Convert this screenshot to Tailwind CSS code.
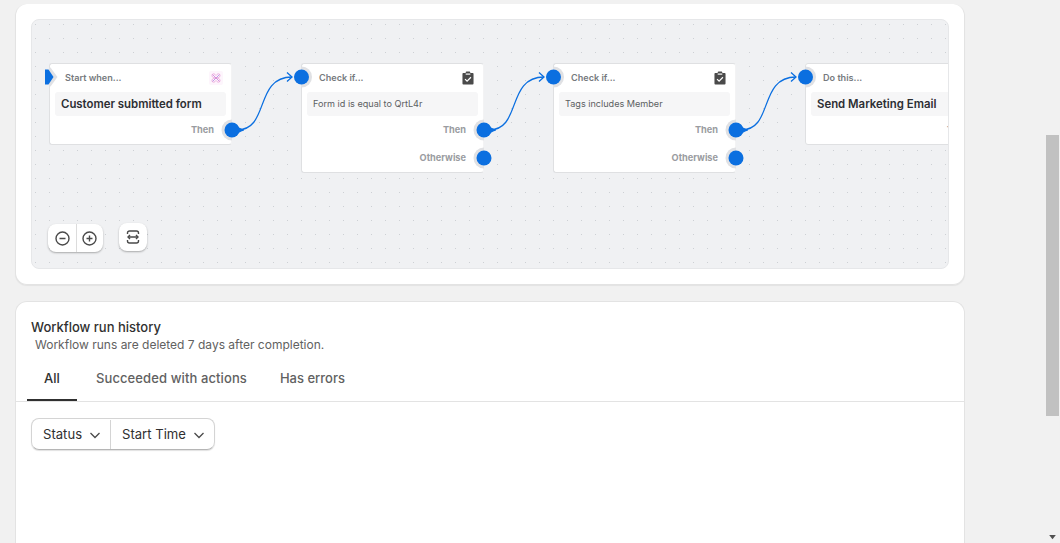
<!DOCTYPE html>
<html lang="en">
<head>
  <meta charset="UTF-8">
  <meta name="viewport" content="width=device-width, initial-scale=1.0">
  <title>Workflow</title>
  <script src="https://cdn.jsdelivr.net/npm/@tailwindcss/browser@4"></script>
</head>
<body class="bg-[#f1f1f1] font-['Inter',sans-serif] text-[#303030] overflow-hidden">
  <div class="flex h-[543px] overflow-hidden">
    <main class="w-[1043px] pl-[15px] pt-1">

      <!-- Workflow canvas card -->
      <section class="w-[950px] h-[281px] p-[15px] bg-white rounded-xl border-b border-x border-[#e3e3e3] shadow-[0_1px_1px_rgba(0,0,0,0.06)]">
        <div class="relative w-[918px] h-[250px] overflow-hidden rounded-lg border border-[#e6e7e9] bg-[#f0f1f3] bg-[radial-gradient(circle_at_0.5px_0.5px,#cdd0d4_0.7px,transparent_0.8px)] bg-[size:14px_14px] bg-[position:3px_4px]">

          <!-- Start node -->
          <div class="absolute left-[17px] top-[43px] w-[183px] h-[82px] bg-white rounded-[3px] border border-[#dfe0e2] border-r-[#f3f3f4]">
            <div class="flex items-center justify-between h-[28px] pl-[15px] pr-[8px] text-[9.1px] font-semibold text-[#767a7e]">
              <span>Start when...</span>
              <svg class="w-[14px] h-[14px]" viewBox="0 0 14 14" fill="none" stroke-width="1"><rect width="14" height="14" rx="2" fill="#fdf5fc" stroke="none"/><path d="M3.500 3.500l7 7" stroke="#c77fdc" opacity=".8"/><path d="M10.500 3.500l-7 7" stroke="#a88be6" opacity=".8"/><path d="M7 4.500C5 1.500 2.500 3 3 5c.3 1.200 1.500 2 4 2s3.700-.8 4-2c.5-2-2-3.500-4-.5zM7 9.500c-2 3-4.500 1.500-4-.5.3-1.200 1.500-2 4-2s3.700.8 4 2c.5 2-2 3.500-4 .5z" stroke="#e58bd0" stroke-width=".8" opacity=".75"/></svg>
            </div>
            <div class="mx-[5px] h-[24px] pl-[6px] rounded-[3px] bg-[#f6f6f7] text-[11.4px] leading-[24px] font-semibold text-[#2c2e33] whitespace-nowrap">Customer submitted form</div>
            <div class="mt-[7px] pr-[17px] text-right text-[9.2px] leading-[14px] font-bold text-[#9a9ca1]">Then</div>
          </div>

          <!-- Check node: form id -->
          <div class="absolute left-[269px] top-[43px] w-[183px] h-[110px] bg-white rounded-[3px] border border-[#dfe0e2] border-r-[#f3f3f4]">
            <div class="flex items-center justify-between h-[28px] pl-[17px] pr-[9px] text-[9.1px] font-semibold text-[#767a7e]">
              <span>Check if...</span>
              <svg class="w-[12px] h-[14px]" viewBox="0 0 13 14"><path d="M4 1.500V1a1 1 0 0 1 1-1h3a1 1 0 0 1 1 1v.500h2.500a1 1 0 0 1 1 1V13a1 1 0 0 1-1 1h-10a1 1 0 0 1-1-1V2.500a1 1 0 0 1 1-1z" fill="#4a4a4a"/><rect x="4" y="2" width="5" height="1.600" fill="#d8d8d8"/><path d="M3.300 8.200l2.200 2.200 4.200-4.200" fill="none" stroke="#fff" stroke-width="1.300"/></svg>
            </div>
            <div class="mx-[5px] h-[24px] pl-[6px] rounded-[3px] bg-[#f6f6f7] text-[9.1px] leading-[24px] text-[#5c5f62] whitespace-nowrap">Form id is equal to QrtL4r</div>
            <div class="mt-[7px] pr-[17px] text-right text-[9.2px] leading-[14px] font-bold text-[#9a9ca1]">Then</div>
            <div class="mt-[14px] pr-[17px] text-right text-[9.2px] leading-[14px] font-bold text-[#9a9ca1]">Otherwise</div>
          </div>

          <!-- Check node: tags -->
          <div class="absolute left-[521px] top-[43px] w-[183px] h-[110px] bg-white rounded-[3px] border border-[#dfe0e2] border-r-[#f3f3f4]">
            <div class="flex items-center justify-between h-[28px] pl-[17px] pr-[9px] text-[9.1px] font-semibold text-[#767a7e]">
              <span>Check if...</span>
              <svg class="w-[12px] h-[14px]" viewBox="0 0 13 14"><path d="M4 1.500V1a1 1 0 0 1 1-1h3a1 1 0 0 1 1 1v.500h2.500a1 1 0 0 1 1 1V13a1 1 0 0 1-1 1h-10a1 1 0 0 1-1-1V2.500a1 1 0 0 1 1-1z" fill="#4a4a4a"/><rect x="4" y="2" width="5" height="1.600" fill="#d8d8d8"/><path d="M3.300 8.200l2.200 2.200 4.200-4.200" fill="none" stroke="#fff" stroke-width="1.300"/></svg>
            </div>
            <div class="mx-[5px] h-[24px] pl-[6px] rounded-[3px] bg-[#f6f6f7] text-[9.1px] leading-[24px] text-[#5c5f62] whitespace-nowrap">Tags includes Member</div>
            <div class="mt-[7px] pr-[17px] text-right text-[9.2px] leading-[14px] font-bold text-[#9a9ca1]">Then</div>
            <div class="mt-[14px] pr-[17px] text-right text-[9.2px] leading-[14px] font-bold text-[#9a9ca1]">Otherwise</div>
          </div>

          <!-- Action node, runs past the canvas edge -->
          <div class="absolute left-[773px] top-[43px] w-[183px] h-[82px] bg-white rounded-[3px] border border-[#dfe0e2]">
            <div class="flex items-center h-[28px] pl-[17px] text-[9.1px] font-semibold text-[#767a7e]">Do this...</div>
            <div class="mx-[5px] h-[24px] pl-[6px] rounded-[3px] bg-[#f6f6f7] text-[11.4px] leading-[24px] font-semibold text-[#2c2e33] whitespace-nowrap">Send Marketing Email</div>
            <div class="mt-[7px] pr-[17px] text-right text-[9.2px] leading-[14px] font-bold text-[#9a9ca1]">Then</div>
          </div>

          <!-- Connections and ports, coordinates are canvas positions -->
          <svg class="absolute left-0 top-0 w-[918px] h-[250px]" viewBox="0 0 918 250" fill="none">
            <path d="M17 47.500h1.500l7 9.500-7 9.500H17z" fill="#e0e1e4"/>
            <path d="M13 49.500h3.500l5 7.500-5 7.500H13z" fill="#0b6fe0"/>

            <!-- halos only show on the card side of each port -->
            <g fill="#e0e1e4">
              <path d="M269.500 46.500a10.500 10.500 0 0 1 0 21z"/><path d="M521.500 46.500a10.500 10.500 0 0 1 0 21z"/><path d="M773.500 46.500a10.500 10.500 0 0 1 0 21z"/>
              <path d="M200 99.500a10.500 10.500 0 0 0 0 21z"/><path d="M452 99.500a10.500 10.500 0 0 0 0 21z"/><path d="M704 99.500a10.500 10.500 0 0 0 0 21z"/>
              <path d="M452 127.500a10.500 10.500 0 0 0 0 21z"/><path d="M704 127.500a10.500 10.500 0 0 0 0 21z"/>
            </g>

            <g stroke="#0b6fe0" stroke-width="1.300">
              <path d="M205 110C238 110 222 57 260 57"/><path d="M255 52.500l5 4.500-5 4.500"/>
              <path d="M457 110C490 110 474 57 512 57"/><path d="M507 52.500l5 4.500-5 4.500"/>
              <path d="M709 110C742 110 726 57 764 57"/><path d="M759 52.500l5 4.500-5 4.500"/>
            </g>

            <g fill="#0b6fe0">
              <circle cx="269.500" cy="57" r="7.500"/><circle cx="521.500" cy="57" r="7.500"/><circle cx="773.500" cy="57" r="7.500"/>
              <circle cx="200" cy="110" r="7.500"/><circle cx="452" cy="110" r="7.500"/><circle cx="704" cy="110" r="7.500"/>
              <path d="M204 104q2 4 8 5.500v1q-6 1.500-8 5.500z"/><path d="M456 104q2 4 8 5.500v1q-6 1.500-8 5.500z"/><path d="M708 104q2 4 8 5.500v1q-6 1.500-8 5.500z"/>
              <circle cx="452" cy="138" r="7.500"/><circle cx="704" cy="138" r="7.500"/>
            </g>
          </svg>

          <!-- Zoom controls -->
          <div class="absolute left-[16px] top-[204px] flex w-[55px] h-[28px] bg-white rounded-lg shadow-[0_1px_2px_rgba(0,0,0,0.3)]">
            <button class="flex flex-1 items-center justify-center pl-px border-r border-[#dcdcdc]">
              <svg class="w-[15px] h-[15px]" viewBox="0 0 15 15" fill="none" stroke="#4a4a4a" stroke-width="1.400"><circle cx="7.500" cy="7.500" r="6.500"/><path d="M4.500 7.500h6"/></svg>
            </button>
            <button class="flex flex-1 items-center justify-center">
              <svg class="w-[15px] h-[15px]" viewBox="0 0 15 15" fill="none" stroke="#4a4a4a" stroke-width="1.400"><circle cx="7.500" cy="7.500" r="6.500"/><path d="M4.500 7.500h6M7.500 4.500v6"/></svg>
            </button>
          </div>
          <button class="absolute left-[87px] top-[203px] flex items-center justify-center w-[28px] h-[28px] bg-white rounded-lg shadow-[0_1px_2px_rgba(0,0,0,0.3)]">
            <svg class="w-[14px] h-[14px]" viewBox="0 0 14 14" fill="none" stroke="#4a4a4a" stroke-width="1.400"><path d="M1.500 4V3A2 2 0 0 1 3.500 1h7a2 2 0 0 1 2 2v1M1.500 10v1a2 2 0 0 0 2 2h7a2 2 0 0 0 2-2v-1M2 7h10"/><path d="M4 5L2 7l2 2M10 5l2 2-2 2"/></svg>
          </button>
        </div>
      </section>

      <!-- Run history card -->
      <section class="w-[950px] h-[300px] mt-[16px] bg-white rounded-t-xl border-t border-x border-[#e3e3e3]">
        <div class="pl-[15px] pt-[17px]">
          <h2 class="text-[13px] leading-[16px] font-medium text-[#303030]">Workflow run history</h2>
          <p class="pl-1 pt-px text-[12px] leading-[18px] text-[#616161]">Workflow runs are deleted 7 days after completion.</p>
        </div>
        <div class="flex h-[48px] pl-[11px] border-b border-[#e3e3e3] text-[13px] font-medium">
          <div class="flex items-center justify-center w-[50px] h-[47px] pt-[5px] border-b-[2px] border-[#303030] text-[#303030]">All</div>
          <div class="flex items-center h-[47px] pt-[3px] pl-[19px] pr-[16px] tracking-[0.1px] text-[#616161]">Succeeded with actions</div>
          <div class="flex items-center h-[47px] pt-[3px] pl-[17px] text-[#616161]">Has errors</div>
        </div>
        <div class="flex w-[184px] h-[32px] mt-[16px] ml-[15px] pt-px rounded-lg border border-[#d4d4d4] border-b-[#b5b5b5] shadow-[0_1px_1px_rgba(0,0,0,0.12)] text-[13.1px] text-[#303030]">
          <div class="flex items-center gap-[7px] w-[79px] pl-[11px] border-r border-[#d4d4d4]">
            <span>Status</span>
            <svg class="w-[12px] h-[12px]" viewBox="0 0 12 12" fill="none" stroke="#4a4a4a" stroke-width="1.300"><path d="M1.500 4l4.500 4.500L10.500 4"/></svg>
          </div>
          <div class="flex items-center gap-[7px] pl-[11px]">
            <span>Start Time</span>
            <svg class="w-[12px] h-[12px]" viewBox="0 0 12 12" fill="none" stroke="#4a4a4a" stroke-width="1.300"><path d="M1.500 4l4.500 4.500L10.500 4"/></svg>
          </div>
        </div>
      </section>
    </main>

    <!-- Window scrollbar -->
    <aside class="relative w-[17px] h-[543px] bg-[#f1f1f1]">
      <div class="absolute left-[3px] top-[135px] w-[13px] h-[281px] bg-[#c1c1c1]"></div>
      <svg class="absolute left-[6px] top-[535px] w-[7px] h-[5px]" viewBox="0 0 8 6"><path d="M0 0h8L4 5z" fill="#505050"/></svg>
    </aside>
  </div>
</body>
</html>
